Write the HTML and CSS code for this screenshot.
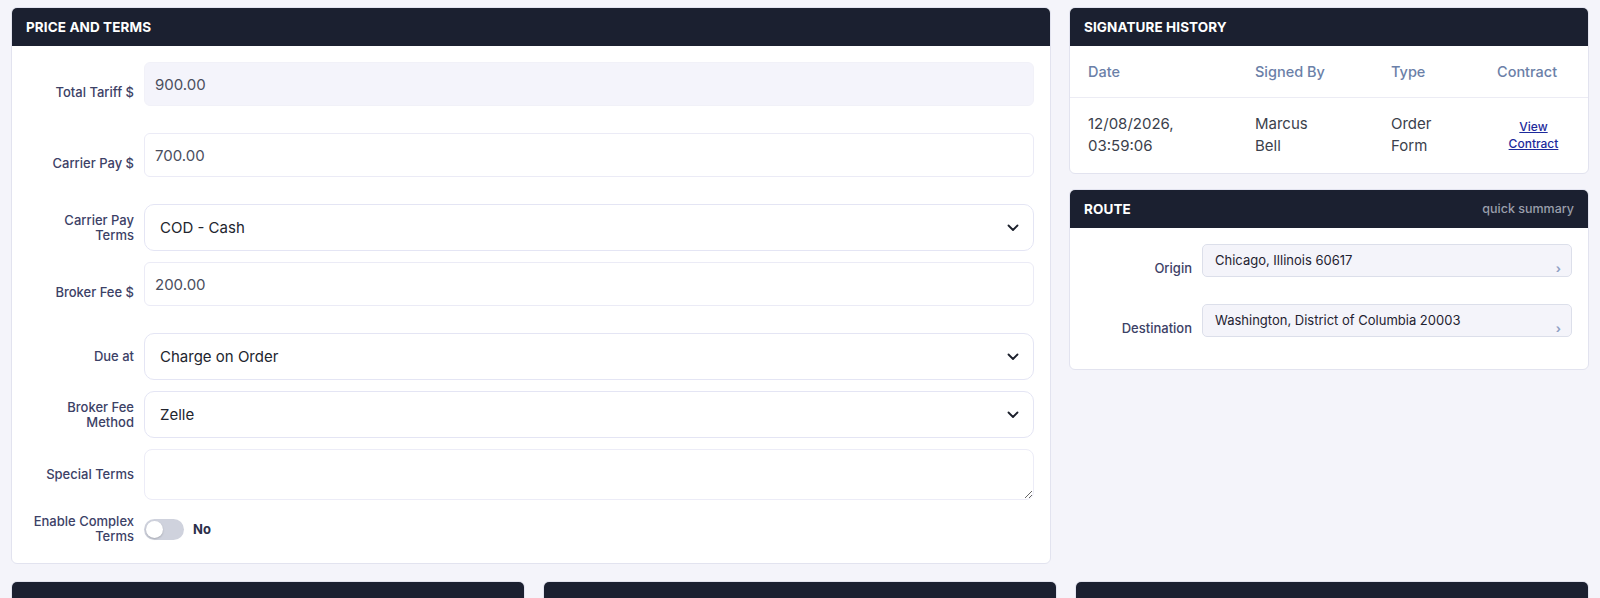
FILE: index.html
```html
<!DOCTYPE html>
<html lang="en">
<head>
  <meta charset="UTF-8">
  <meta name="viewport" content="width=device-width, initial-scale=1.0">
  <title>Order - price and terms</title>
  <link rel="stylesheet" href="styles.css">
</head>
<body>
  <div class="page">
    <div class="top">
      <section class="card">
        <header class="card-head">
          <span>Price and Terms</span>
        </header>
        <div class="form">
          <div class="row">
            <label>Total Tariff $</label>
            <div class="control hint">
              <input class="input readonly" type="text" value="900.00" readonly>
            </div>
          </div>
          <div class="row">
            <label>Carrier Pay $</label>
            <div class="control hint">
              <input class="input" type="text" value="700.00">
            </div>
          </div>
          <div class="row">
            <label>Carrier Pay Terms</label>
            <div class="control select-wrap">
              <select class="select">
                <option>COD - Cash</option>
              </select>
              <svg class="chevron" width="12" height="8" viewBox="0 0 12 8"><path d="M1.5 1.5 6 6l4.5-4.5" fill="none" stroke="#1b1f2b" stroke-width="1.8" stroke-linecap="round" stroke-linejoin="round"/></svg>
            </div>
          </div>
          <div class="row">
            <label>Broker Fee $</label>
            <div class="control hint">
              <input class="input" type="text" value="200.00">
            </div>
          </div>
          <div class="row">
            <label>Due at</label>
            <div class="control select-wrap">
              <select class="select">
                <option>Charge on Order</option>
              </select>
              <svg class="chevron" width="12" height="8" viewBox="0 0 12 8"><path d="M1.5 1.5 6 6l4.5-4.5" fill="none" stroke="#1b1f2b" stroke-width="1.8" stroke-linecap="round" stroke-linejoin="round"/></svg>
            </div>
          </div>
          <div class="row">
            <label>Broker Fee Method</label>
            <div class="control select-wrap">
              <select class="select">
                <option>Zelle</option>
              </select>
              <svg class="chevron" width="12" height="8" viewBox="0 0 12 8"><path d="M1.5 1.5 6 6l4.5-4.5" fill="none" stroke="#1b1f2b" stroke-width="1.8" stroke-linecap="round" stroke-linejoin="round"/></svg>
            </div>
          </div>
          <div class="row">
            <label>Special Terms</label>
            <div class="control">
              <textarea class="textarea"></textarea>
            </div>
          </div>
          <div class="row toggle-row">
            <label>Enable Complex Terms</label>
            <div class="control toggle-line">
              <span class="toggle"><span class="knob"></span></span>
              <span class="toggle-text">No</span>
            </div>
          </div>
        </div>
      </section>

      <div class="side">
        <section class="card">
          <header class="card-head">
            <span>Signature History</span>
          </header>
          <table class="sig-table">
            <colgroup>
              <col class="c-date">
              <col class="c-by">
              <col class="c-type">
              <col>
            </colgroup>
            <thead>
              <tr>
                <th>Date</th>
                <th>Signed By</th>
                <th>Type</th>
                <th>Contract</th>
              </tr>
            </thead>
            <tbody>
              <tr>
                <td>12/08/2026, 03:59:06</td>
                <td>Marcus Bell</td>
                <td>Order Form</td>
                <td class="link-cell"><a href="#">View Contract</a></td>
              </tr>
            </tbody>
          </table>
        </section>

        <section class="card">
          <header class="card-head">
            <span>Route</span>
            <span class="head-note">quick summary</span>
          </header>
          <div class="form route">
            <div class="row">
              <label>Origin</label>
              <div class="control hint">
                <div class="route-value">Chicago, Illinois 60617<span class="more">›</span></div>
              </div>
            </div>
            <div class="row">
              <label>Destination</label>
              <div class="control hint">
                <div class="route-value">Washington, District of Columbia 20003<span class="more">›</span></div>
              </div>
            </div>
          </div>
        </section>
      </div>
    </div>

    <div class="bottom">
      <section class="card"><header class="card-head"></header></section>
      <section class="card"><header class="card-head"></header></section>
      <section class="card"><header class="card-head"></header></section>
    </div>
  </div>
</body>
</html>
```

FILE: styles.css
```css
body {
  margin: 0;
  padding: 0;
  background-color: #f4f4fa;
  font-family: Inter, "Noto Sans", sans-serif;
  color: #3c4166;
}

.page {
  display: flex;
  flex-direction: column;
  gap: 17px;
  padding: 7px 11px;
}

.top {
  display: grid;
  grid-template-columns: 2fr 1fr;
  gap: 18px;
  align-items: start;
}

.side {
  display: flex;
  flex-direction: column;
  gap: 15px;
}

.bottom {
  display: grid;
  grid-template-columns: repeat(3, 1fr);
  gap: 18px;
}

/* cards */
.card {
  background-color: #fff;
  border: 1px solid #e2e3ef;
  border-radius: 6px;
  overflow: hidden;
}

.card-head {
  display: flex;
  align-items: center;
  justify-content: space-between;
  height: 38px;
  padding: 0 14px;

  background-color: #1b2030;
  color: #fff;
  font-size: 13.5px;
  font-weight: 700;
  text-transform: uppercase;
  letter-spacing: 0.1px;
}
.head-note {
  color: #9a9fab;
  font-size: 12.5px;
  font-weight: 500;
  text-transform: none;
  letter-spacing: 0;
}

/* form rows */
.form {
  display: flex;
  flex-direction: column;
  gap: 11px;
  padding: 16px 16px 19px 12px;
}
.form.route {
  gap: 11px;
  padding-bottom: 16px;
}

.row {
  display: grid;
  grid-template-columns: 110px 1fr;
  column-gap: 10px;
  align-items: center;
}
.row label {
  text-align: right;
  font-size: 13px;
  line-height: 15px;
  font-weight: 500;
  color: #3c4166;
}
.toggle-row {
  margin-top: 3px;
}

.control {
  position: relative;
}
.control.hint {
  padding-bottom: 16px;
}

.input {
  box-sizing: border-box;
  width: 100%;
  height: 44px;
  padding: 0 10px;

  border: 1px solid #ebebf6;
  border-radius: 6px;
  outline: none;
  background-color: #fff;

  font-family: inherit;
  font-size: 15px;
  color: #4a4e5e;
}
.input.readonly {
  background-color: #f4f4fb;
  border-color: #f1f1f8;
}

.select {
  box-sizing: border-box;
  width: 100%;
  height: 47px;
  padding: 0 40px 0 15px;

  appearance: none;
  -webkit-appearance: none;
  border: 1px solid #e4e5f4;
  border-radius: 10px;
  outline: none;
  background-color: #fff;

  font-family: inherit;
  font-size: 15px;
  color: #22252e;
}
.chevron {
  position: absolute;
  right: 15px;
  top: 20px;
  pointer-events: none;
}

.textarea {
  display: block;
  box-sizing: border-box;
  width: 100%;
  height: 51px;
  padding: 8px 10px;

  border: 1px solid #ececf7;
  border-radius: 8px;
  outline: none;
  resize: vertical;

  font-family: inherit;
  font-size: 15px;
}

.toggle-line {
  display: flex;
  align-items: center;
  gap: 9px;
}
.toggle {
  position: relative;
  width: 40px;
  height: 21px;
  border-radius: 11px;
  background-color: #cfd2dd;
}
.knob {
  position: absolute;
  left: 2px;
  top: 2px;
  width: 17px;
  height: 17px;
  border-radius: 50%;
  background-color: #fff;
  box-shadow: 0 1px 2px rgba(0,0,0,0.2);
}
.toggle-text {
  font-size: 13px;
  font-weight: 700;
  color: #2b2f4a;
}

/* signature table */
.sig-table {
  width: 100%;
  table-layout: fixed;
  border-collapse: collapse;
}
.sig-table .c-date { width: 167px; }
.sig-table .c-by { width: 136px; }
.sig-table .c-type { width: 106px; }

.sig-table th {
  box-sizing: border-box;
  height: 51px;
  padding: 0 0 0 18px;
  text-align: left;
  font-size: 14.5px;
  font-weight: 500;
  color: #6b80a8;
  border-bottom: 1px solid #ececf4;
}
.sig-table td {
  height: 75px;
  padding: 0 40px 0 18px;
  font-size: 15px;
  line-height: 22px;
  color: #3b3f4c;
}
.sig-table td.link-cell {
  padding: 0 18px;
  text-align: center;
  line-height: 16px;
}
.link-cell a {
  font-size: 12px;
  font-weight: 500;
  color: #1d2a9b;
}

/* route */
.route-value {
  position: relative;
  box-sizing: border-box;
  height: 33px;
  padding: 0 12px;
  line-height: 31px;

  border: 1px solid #dcdfea;
  border-radius: 5px;
  background-color: #f4f4fa;

  font-size: 13px;
  color: #1f2230;
}
.route-value .more {
  position: absolute;
  right: 10px;
  bottom: -8px;
  font-size: 12px;
  font-weight: 700;
  color: #8ea0c4;
}
```
